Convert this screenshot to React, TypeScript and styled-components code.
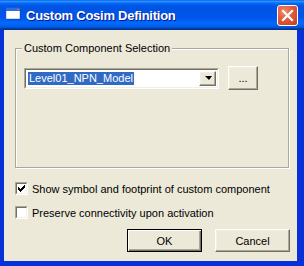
import React from "react";
import styled, { createGlobalStyle, css } from "styled-components";

const Global = createGlobalStyle`
  html, body { margin: 0; padding: 0; background: #ece9d8; }
  body { font-family: "Liberation Sans", Arial, sans-serif; font-size: 11px; color: #000; }
`;

const Window = styled.div`
  width: 304px;
  height: 266px;
  display: flex;
  flex-direction: column;
  background: #0831d9;
  overflow: hidden;
`;

const TitleBar = styled.div`
  height: 30px;
  flex: none;
  display: flex;
  align-items: center;
  padding: 0 6px 0 6px;
  box-sizing: border-box;
  background: linear-gradient(
    to bottom,
    #0058ee 0%,
    #3593ff 4%,
    #288eff 6%,
    #127dff 8%,
    #036ffc 10%,
    #0262ee 14%,
    #0057e5 20%,
    #0054e3 24%,
    #0055eb 56%,
    #005bf5 66%,
    #026afe 76%,
    #0062ef 86%,
    #0052d6 92%,
    #0040ab 94%,
    #003092 100%
  );
`;

const TitleIcon = styled.svg`
  width: 16px;
  height: 16px;
  flex: none;
  margin-right: 4px;
`;

const Title = styled.div`
  flex: 1;
  color: #fff;
  font-family: "Liberation Sans", Arial, sans-serif;
  font-weight: bold;
  font-size: 13px;
  letter-spacing: -0.25px;
  text-shadow: 1px 1px 0 #0a1883;
  white-space: nowrap;
  padding-top: 1px;
`;

const CloseButton = styled.div`
  width: 21px;
  height: 21px;
  box-sizing: border-box;
  border: 1px solid #fff;
  border-radius: 3px;
  background: radial-gradient(circle at 35% 30%, #f08b6c 0%, #e25a3c 45%, #c93a1c 100%);
  display: flex;
  align-items: center;
  justify-content: center;
`;

const Client = styled.div`
  flex: 1;
  margin: 0 7px 5px 4px;
  background: #ece9d8;
  display: flex;
  flex-direction: column;
  padding: 18px 0 0 11px;
`;

const GroupBox = styled.div`
  position: relative;
  width: 274px;
  height: 120px;
  box-sizing: border-box;
  border: 1px solid #aca899;
  box-shadow: inset 1px 1px 0 #fff, 1px 1px 0 #fff;
  padding: 17px 0 0 8px;
`;

const Legend = styled.span`
  position: absolute;
  top: -7px;
  left: 6px;
  padding: 0 2px;
  background: #ece9d8;
  line-height: 13px;
  white-space: nowrap;
`;

const ComboRow = styled.div`
  display: flex;
  align-items: center;
  gap: 9px;
`;

const Combo = styled.div`
  width: 195px;
  height: 21px;
  box-sizing: border-box;
  border-style: solid;
  border-width: 1px;
  border-color: #aca899 #fff #fff #aca899;
  background: #fff;
  display: flex;
`;

const ComboInner = styled.div`
  flex: 1;
  display: flex;
  align-items: stretch;
  border-style: solid;
  border-width: 1px;
  border-color: #716f64 #f1efe2 #f1efe2 #716f64;
  padding: 1px 1px 1px 2px;
`;

const ComboText = styled.div`
  flex: 1;
  display: flex;
  align-items: center;
`;

const Selected = styled.span`
  background: #316ac5;
  color: #fff;
  padding: 0 1px;
  line-height: 13px;
`;

const raised = css`
  border-style: solid;
  border-width: 1px;
  border-color: #fff #716f64 #716f64 #fff;
  box-shadow: inset -1px -1px 0 #aca899, inset 1px 1px 0 #f1efe2;
  background: #ece9d8;
`;

const DropButton = styled.div`
  ${raised};
  width: 17px;
  box-sizing: border-box;
  display: flex;
  align-items: center;
  justify-content: center;
`;

const Arrow = styled.div`
  width: 0;
  height: 0;
  border-left: 4px solid transparent;
  border-right: 3px solid transparent;
  border-top: 4px solid #000;
  margin-left: 1px;
`;

const Button = styled.button<{ $default?: boolean; $w: number; $h: number }>`
  width: ${(p) => p.$w}px;
  height: ${(p) => p.$h}px;
  box-sizing: border-box;
  font: inherit;
  color: #000;
  padding: 0;
  display: flex;
  align-items: center;
  justify-content: center;
  ${(p) =>
    p.$default
      ? css`
          border: 1px solid #000;
          background: #ece9d8;
          box-shadow: inset 1px 1px 0 #fff, inset -1px -1px 0 #716f64, inset -2px -2px 0 #aca899;
        `
      : raised}
`;

const CheckRow = styled.label`
  display: flex;
  align-items: center;
  gap: 4px;
  height: 13px;
`;

const CheckBox = styled.span`
  width: 13px;
  height: 13px;
  box-sizing: border-box;
  border-style: solid;
  border-width: 1px;
  border-color: #aca899 #fff #fff #aca899;
  display: flex;
  flex: none;
`;

const CheckInner = styled.span`
  flex: 1;
  background: #fff;
  border-style: solid;
  border-width: 1px;
  border-color: #716f64 #f1efe2 #f1efe2 #716f64;
  display: flex;
  align-items: center;
  justify-content: center;
`;

const Checks = styled.div`
  display: flex;
  flex-direction: column;
  gap: 11px;
  margin-top: 14px;
`;

const ButtonRow = styled.div`
  display: flex;
  gap: 13px;
  margin-top: 10px;
  margin-left: 112px;
`;

const Check: React.FC<{ checked?: boolean }> = ({ checked }) => (
  <CheckBox>
    <CheckInner>
      {checked && (
        <svg width="7" height="7" viewBox="0 0 7 7">
          <path d="M0 2h1v1h1v1h1v-1h1v-1h1v-1h1v-1h1v3h-1v1h-1v1h-1v1h-1v1h-1v-1h-1v-1h-1z" fill="#000" />
        </svg>
      )}
    </CheckInner>
  </CheckBox>
);

export default function App() {
  return (
    <>
      <Global />
      <Window>
        <TitleBar>
          <TitleIcon viewBox="0 0 16 16">
            <rect x="1" y="2" width="14" height="11" fill="#0a2a8a" opacity="0.5" />
            <rect x="0" y="1" width="14" height="11" fill="#fff" />
            <rect x="0" y="1" width="14" height="3" fill="#2a6ee8" />
            <rect x="11" y="2" width="2" height="1" fill="#f06a3c" />
            <rect x="0" y="1" width="14" height="11" fill="none" stroke="#3a6ed8" strokeWidth="0.5" />
          </TitleIcon>
          <Title>Custom Cosim Definition</Title>
          <CloseButton>
            <svg width="13" height="13" viewBox="0 0 13 13">
              <path d="M2 2 L11 11 M11 2 L2 11" stroke="#fff" strokeWidth="2.2" strokeLinecap="square" />
            </svg>
          </CloseButton>
        </TitleBar>
        <Client>
          <GroupBox>
            <Legend>Custom Component Selection</Legend>
            <ComboRow>
              <Combo>
                <ComboInner>
                  <ComboText>
                    <Selected>Level01_NPN_Model</Selected>
                  </ComboText>
                  <DropButton>
                    <Arrow />
                  </DropButton>
                </ComboInner>
              </Combo>
              <Button $w={30} $h={24}>...</Button>
            </ComboRow>
          </GroupBox>
          <Checks>
            <CheckRow>
              <Check checked />
              <span>Show symbol and footprint of custom component</span>
            </CheckRow>
            <CheckRow>
              <Check />
              <span>Preserve connectivity upon activation</span>
            </CheckRow>
          </Checks>
          <ButtonRow>
            <Button $default $w={75} $h={23}>OK</Button>
            <Button $w={75} $h={23}>Cancel</Button>
          </ButtonRow>
        </Client>
      </Window>
    </>
  );
}
